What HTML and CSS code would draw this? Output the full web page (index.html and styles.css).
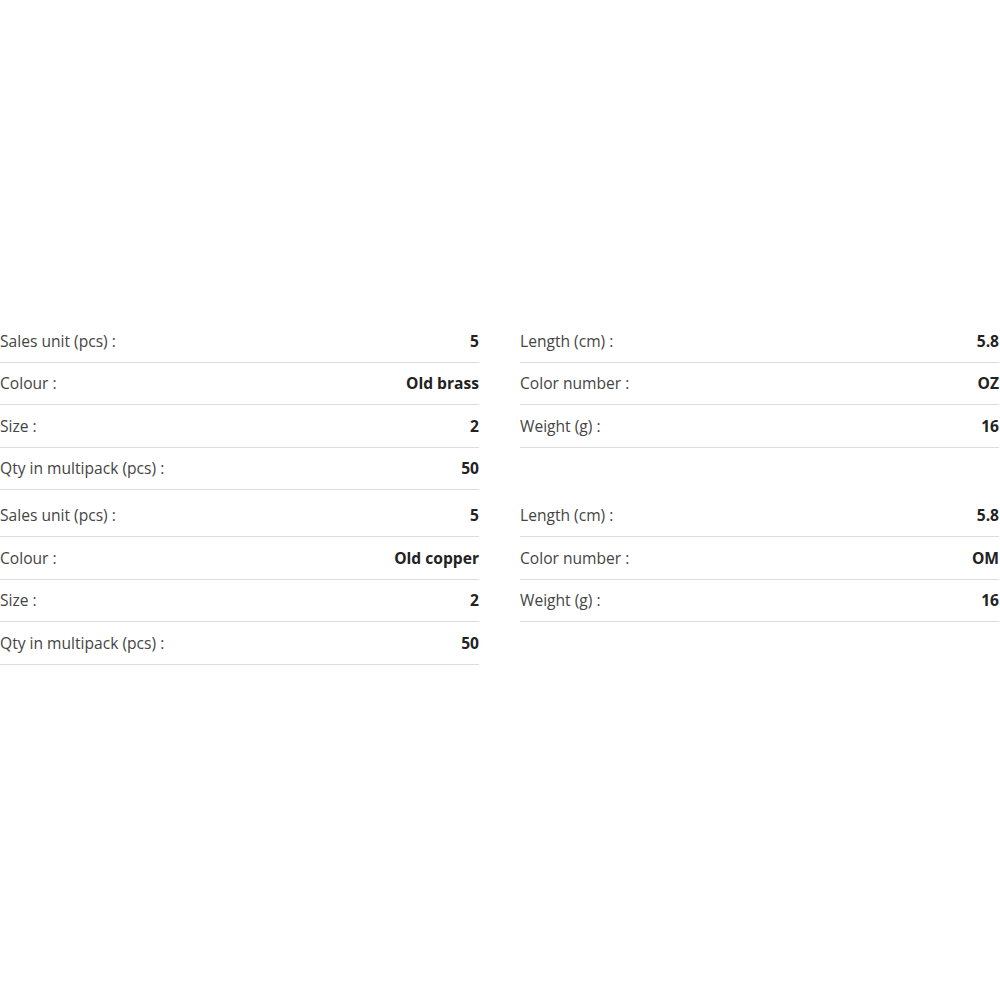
FILE: index.html
```html
<!DOCTYPE html>
<html lang="en">
<head>
<meta charset="utf-8">
<title>Specifications</title>
<link rel="stylesheet" href="styles.css">
</head>
<body>
<main class="specs">
  <section class="spec-group">
    <div class="spec-col">
      <div class="spec-row"><span class="label">Sales unit (pcs) :</span><span class="value">5</span></div>
      <div class="spec-row"><span class="label">Colour :</span><span class="value">Old brass</span></div>
      <div class="spec-row"><span class="label">Size :</span><span class="value">2</span></div>
      <div class="spec-row"><span class="label">Qty in multipack (pcs) :</span><span class="value">50</span></div>
    </div>
    <div class="spec-col">
      <div class="spec-row"><span class="label">Length (cm) :</span><span class="value">5.8</span></div>
      <div class="spec-row"><span class="label">Color number :</span><span class="value">OZ</span></div>
      <div class="spec-row"><span class="label">Weight (g) :</span><span class="value">16</span></div>
    </div>
  </section>
  <section class="spec-group">
    <div class="spec-col">
      <div class="spec-row"><span class="label">Sales unit (pcs) :</span><span class="value">5</span></div>
      <div class="spec-row"><span class="label">Colour :</span><span class="value">Old copper</span></div>
      <div class="spec-row"><span class="label">Size :</span><span class="value">2</span></div>
      <div class="spec-row"><span class="label">Qty in multipack (pcs) :</span><span class="value">50</span></div>
    </div>
    <div class="spec-col">
      <div class="spec-row"><span class="label">Length (cm) :</span><span class="value">5.8</span></div>
      <div class="spec-row"><span class="label">Color number :</span><span class="value">OM</span></div>
      <div class="spec-row"><span class="label">Weight (g) :</span><span class="value">16</span></div>
    </div>
  </section>
</main>
</body>
</html>
```
FILE: styles.css
```css
html, body {
  margin: 0;
  padding: 0;
  background: #ffffff;
}
body {
  font-family: "Open Sans", "Noto Sans", sans-serif;
  font-size: 15.6px;
  color: #3a3a3a;
}
.specs {
  padding-top: 320px;
  display: flex;
  flex-direction: column;
  gap: 4.5px;
}
.spec-group {
  display: flex;
  gap: 41px;
  align-items: flex-start;
}
.spec-col {
  width: 479px;
  display: flex;
  flex-direction: column;
}
.spec-row {
  height: 41.5px;
  display: flex;
  align-items: center;
  justify-content: space-between;
  border-bottom: 1px solid #dcdcdc;
}
.label {
  color: #444444;
}
.value {
  font-weight: 700;
  color: #222222;
}
```
